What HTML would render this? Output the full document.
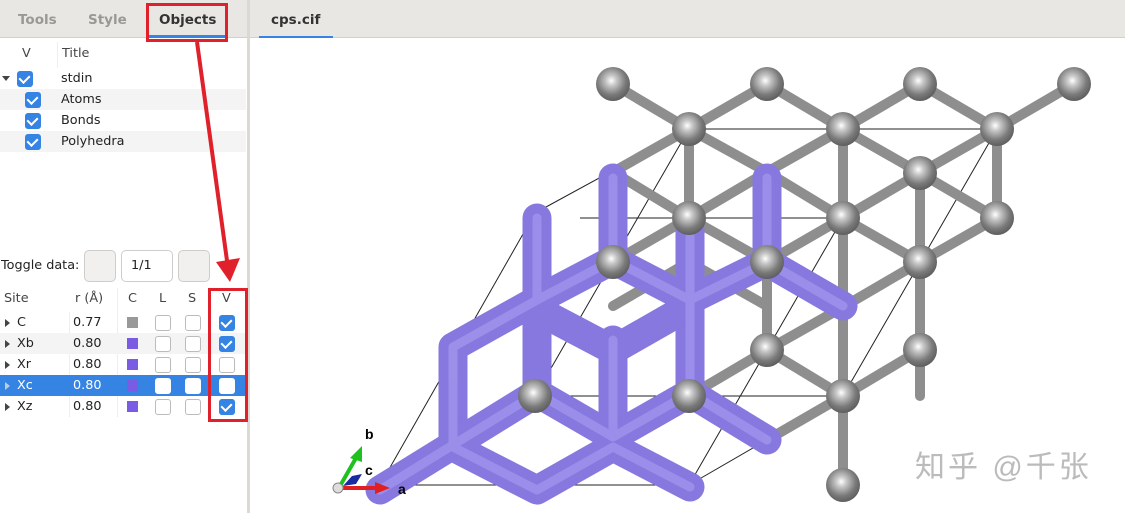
<!DOCTYPE html>
<html><head><meta charset="utf-8"><style>
*{margin:0;padding:0;box-sizing:border-box}
body{width:1125px;height:513px;background:#fff;font-family:"Liberation Sans","DejaVu Sans",sans-serif;font-size:13px;color:#222;position:relative;overflow:hidden}
.abs{position:absolute}
.tabbar{top:0;height:38px;background:#e9e7e4;border-bottom:1px solid #d3d0cc}
.tab{position:absolute;top:12px;font-weight:bold;font-size:13.5px;color:#9a9894;font-family:"DejaVu Sans",sans-serif}
.row{position:absolute;left:0;width:246px;height:21px;line-height:21px}
.cb{position:absolute;width:16px;height:16px;border-radius:3px;background:#3584e4}
.cb::after{content:"";position:absolute;left:4px;top:2px;width:5px;height:8px;border:solid #fff;border-width:0 2.5px 2.5px 0;transform:rotate(45deg)}
.ub{position:absolute;width:16px;height:16px;border-radius:3px;border:1px solid #bbb;background:#fff}
.t{position:absolute;font-family:"DejaVu Sans",sans-serif;font-size:12.8px}
.btn{position:absolute;top:250px;height:32px;border:1px solid #cfcccc;border-radius:5px;background:#f1f0ef}
.sw{position:absolute;width:11px;height:11px}
.tri{position:absolute;width:0;height:0;border-top:4px solid transparent;border-bottom:4px solid transparent;border-left:5px solid #444}
</style></head><body>
<div class="abs tabbar" style="left:0;width:247px"></div>
<div class="tab" style="left:18px">Tools</div>
<div class="tab" style="left:88px">Style</div>
<div class="tab" style="left:159px;color:#333">Objects</div>
<div class="abs" style="left:148px;top:35px;width:78px;height:3px;background:#3584e4"></div>
<div class="abs" style="left:146px;top:3px;width:82px;height:39px;border:3px solid #e0202a"></div>

<div class="abs" style="left:247px;top:0;width:3px;height:513px;background:#dcd9d5"></div>
<div class="abs tabbar" style="left:250px;width:875px"></div>
<div class="tab" style="left:271px;color:#333">cps.cif</div>
<div class="abs" style="left:259px;top:36px;width:74px;height:2px;background:#3584e4"></div>

<div class="t" style="left:22px;top:46px;color:#444">V</div>
<div class="abs" style="left:57px;top:42px;width:1px;height:26px;background:#eee"></div>
<div class="t" style="left:62px;top:46px;color:#444">Title</div>
<div class="row" style="top:89px;background:#f4f4f4"></div>
<div class="row" style="top:131px;background:#f4f4f4"></div>
<div class="abs" style="left:2px;top:76px;border-left:4px solid transparent;border-right:4px solid transparent;border-top:5px solid #444"></div>
<div class="cb" style="left:17px;top:71px"></div><div class="t" style="left:61px;top:71px">stdin</div>
<div class="cb" style="left:25px;top:92px"></div><div class="t" style="left:61px;top:92px">Atoms</div>
<div class="cb" style="left:25px;top:113px"></div><div class="t" style="left:61px;top:113px">Bonds</div>
<div class="cb" style="left:25px;top:134px"></div><div class="t" style="left:61px;top:134px">Polyhedra</div>

<div class="t" style="left:1px;top:258px">Toggle data:</div>
<div class="btn" style="left:84px;width:32px"></div>
<div class="btn" style="left:121px;width:52px;background:#fff"></div><div class="t" style="left:131px;top:258px">1/1</div>
<div class="btn" style="left:178px;width:32px"></div>

<div class="t" style="left:4px;top:291px;color:#444">Site</div>
<div class="t" style="left:75px;top:291px;color:#444">r (Å)</div>
<div class="t" style="left:128px;top:291px;color:#444">C</div>
<div class="t" style="left:159px;top:291px;color:#444">L</div>
<div class="t" style="left:188px;top:291px;color:#444">S</div>
<div class="t" style="left:222px;top:291px;color:#444">V</div>
<div class="abs" style="left:69px;top:312px;width:1px;height:105px;background:#eee"></div>
<div class="abs" style="left:117px;top:288px;width:1px;height:129px;background:#eee"></div>

<div class="row" style="top:333px;background:#f4f4f4"></div>
<div class="row" style="top:375px;background:#3584e4"></div>

<div class="tri" style="left:5px;top:319px"></div><div class="t" style="left:17px;top:315px">C</div><div class="t" style="left:73px;top:315px">0.77</div><div class="sw" style="left:127px;top:317px;background:#999"></div><div class="ub" style="left:155px;top:315px"></div><div class="ub" style="left:185px;top:315px"></div><div class="cb" style="left:219px;top:315px"></div>
<div class="tri" style="left:5px;top:340px"></div><div class="t" style="left:17px;top:336px">Xb</div><div class="t" style="left:73px;top:336px">0.80</div><div class="sw" style="left:127px;top:338px;background:#7a5ce4"></div><div class="ub" style="left:155px;top:336px"></div><div class="ub" style="left:185px;top:336px"></div><div class="cb" style="left:219px;top:336px"></div>
<div class="tri" style="left:5px;top:361px"></div><div class="t" style="left:17px;top:357px">Xr</div><div class="t" style="left:73px;top:357px">0.80</div><div class="sw" style="left:127px;top:359px;background:#7a5ce4"></div><div class="ub" style="left:155px;top:357px"></div><div class="ub" style="left:185px;top:357px"></div><div class="ub" style="left:219px;top:357px"></div>
<div class="tri" style="left:5px;top:382px;border-left-color:#bcd"></div><div class="t" style="left:17px;top:378px;color:#fff">Xc</div><div class="t" style="left:73px;top:378px;color:#fff">0.80</div><div class="sw" style="left:127px;top:380px;background:#7a5ce4"></div><div class="ub" style="left:155px;top:378px;border-color:#fff"></div><div class="ub" style="left:185px;top:378px;border-color:#fff"></div><div class="ub" style="left:219px;top:378px;border-color:#fff"></div>
<div class="tri" style="left:5px;top:403px"></div><div class="t" style="left:17px;top:399px">Xz</div><div class="t" style="left:73px;top:399px">0.80</div><div class="sw" style="left:127px;top:401px;background:#7a5ce4"></div><div class="ub" style="left:155px;top:399px"></div><div class="ub" style="left:185px;top:399px"></div><div class="cb" style="left:219px;top:399px"></div>
<div class="abs" style="left:208px;top:288px;width:40px;height:134px;border:3px solid #e0202a"></div>

<svg class="abs" style="left:0;top:0" width="1125" height="513">
<defs>
<radialGradient id="ball" cx="0.45" cy="0.4" r="0.6"><stop offset="0" stop-color="#fff"/><stop offset="0.25" stop-color="#c8c8c8"/><stop offset="0.7" stop-color="#7a7a7a"/><stop offset="1" stop-color="#5e5e5e"/></radialGradient>
</defs>
<line x1="197" y1="42" x2="228" y2="268" stroke="#e0202a" stroke-width="4"/>
<polygon points="216,262 240,258 230,282" fill="#e0202a"/>

<g stroke="#222" stroke-width="1" fill="none">
<line x1="689" y1="129" x2="997" y2="129"/><line x1="580" y1="218" x2="843" y2="218"/>
<line x1="689" y1="129" x2="535" y2="396"/><line x1="997" y1="129" x2="843" y2="396"/>
<line x1="843" y1="218" x2="689" y2="485"/><line x1="535" y1="396" x2="843" y2="396"/>
<line x1="380" y1="485" x2="689" y2="485"/><line x1="535" y1="213" x2="380" y2="485"/>
<line x1="689" y1="129" x2="535" y2="213"/><line x1="997" y1="129" x2="843" y2="218"/>
<line x1="843" y1="396" x2="689" y2="485"/><line x1="535" y1="396" x2="380" y2="485"/>
</g>
<g stroke="#8e8e8e" stroke-width="10" stroke-linecap="round" fill="none">
<polyline points="613,84 689,129 767,84 843,129 920,84 997,129 1074,84"/>
<line x1="689" y1="129" x2="689" y2="218"/><line x1="843" y1="129" x2="843" y2="485"/><line x1="997" y1="129" x2="997" y2="218"/>
<polyline points="613,172 689,129 767,172 843,129 920,173 997,129"/>
<polyline points="613,172 689,218 767,172 843,218 920,173 997,218"/>
<line x1="920" y1="173" x2="920" y2="396"/>
<polyline points="613,262 689,218 767,262 843,218 920,262 997,218"/>
<line x1="767" y1="262" x2="767" y2="350"/>
<polyline points="843,307 920,262"/>
<polyline points="689,396 767,350 843,396 920,350"/>
<polyline points="767,350 843,307"/>
<polyline points="613,306 689,262 767,306"/>
<line x1="767" y1="440" x2="843" y2="396"/>
<line x1="843" y1="396" x2="843" y2="485"/>
</g>
<g stroke="#8678de" stroke-width="29" stroke-linecap="round" stroke-linejoin="round" fill="none">
<line x1="613" y1="178" x2="613" y2="262"/><line x1="767" y1="178" x2="767" y2="262"/>
<polyline points="537,218 537,300 613,260 690,300 767,262 843,306"/>
<line x1="690" y1="230" x2="690" y2="393"/>
<polyline points="537,300 453,347 453,443"/>
<polyline points="537,310 613,350 690,306"/>
<line x1="613" y1="340" x2="613" y2="437"/>
<line x1="537" y1="300" x2="537" y2="393"/>
<polyline points="380,490 537,393 613,437 690,393 767,440"/>
<polyline points="453,447 537,490 613,447 690,487"/>
</g>
<g stroke="#aa9ef2" stroke-width="9" stroke-linecap="round" stroke-linejoin="round" fill="none" opacity="0.6">
<line x1="613" y1="178" x2="613" y2="262"/><line x1="767" y1="178" x2="767" y2="262"/>
<polyline points="537,218 537,300 613,260 690,300 767,262 843,306"/>
<line x1="690" y1="230" x2="690" y2="393"/>
<polyline points="537,300 453,347 453,443"/>
<line x1="613" y1="340" x2="613" y2="437"/>
<polyline points="380,490 537,393 613,437 690,393 767,440"/>
<polyline points="453,447 537,490 613,447 690,487"/>
</g>
<g fill="url(#ball)">
<circle cx="613" cy="84" r="17"/><circle cx="767" cy="84" r="17"/><circle cx="920" cy="84" r="17"/><circle cx="1074" cy="84" r="17"/>
<circle cx="689" cy="129" r="17"/><circle cx="843" cy="129" r="17"/><circle cx="997" cy="129" r="17"/>
<circle cx="920" cy="173" r="17"/>
<circle cx="689" cy="218" r="17"/><circle cx="843" cy="218" r="17"/><circle cx="997" cy="218" r="17"/>
<circle cx="613" cy="262" r="17"/><circle cx="767" cy="262" r="17"/><circle cx="920" cy="262" r="17"/>
<circle cx="767" cy="350" r="17"/><circle cx="920" cy="350" r="17"/>
<circle cx="535" cy="396" r="17"/><circle cx="689" cy="396" r="17"/><circle cx="843" cy="396" r="17"/>
<circle cx="843" cy="485" r="17"/>
</g>
<g>
<line x1="338" y1="488" x2="378" y2="488" stroke="#e02020" stroke-width="4"/><polygon points="375,482 390,488 375,494" fill="#e02020"/>
<line x1="340" y1="486" x2="356" y2="458" stroke="#20c020" stroke-width="4"/><polygon points="350,458 362,446 362,462" fill="#20c020"/>
<polygon points="343,486 352,476 362,474 356,484" fill="#1a2aa0"/>
<circle cx="338" cy="488" r="5" fill="#ddd" stroke="#888"/>
<text x="365" y="439" font-weight="bold" font-size="14" font-family="Liberation Sans">b</text>
<text x="365" y="475" font-weight="bold" font-size="14" font-family="Liberation Sans">c</text>
<text x="398" y="494" font-weight="bold" font-size="14" font-family="Liberation Sans">a</text>
</g>
<text x="915" y="477" font-size="30" letter-spacing="3" fill="#bbb" font-family="Liberation Sans, Noto Sans CJK SC, sans-serif">知乎 @千张</text>
</svg>
</body></html>
